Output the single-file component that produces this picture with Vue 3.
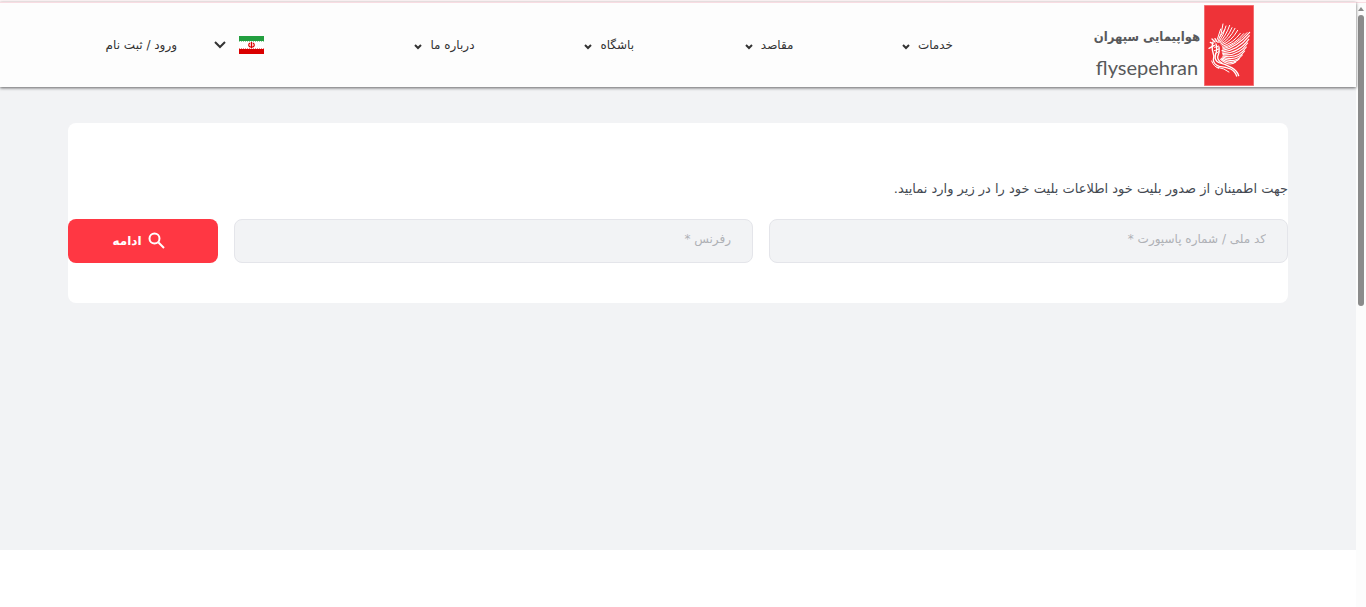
<script setup>
import { ref } from 'vue'

const menuItems = ['خدمات', 'مقاصد', 'باشگاه', 'درباره ما']

const nationalCode = ref('')
const reference = ref('')
</script>

<template>
  <div class="shell">
    <div class="page" dir="rtl" lang="fa">
      <header class="header">
        <a class="logo" href="#">
          <svg class="logo-mark" viewBox="0 0 150 243" aria-hidden="true">
            <rect width="150" height="243" fill="#ee3338" />
            <g fill="none" stroke="#fff" stroke-linecap="round">
              <g stroke-width="3.4">
                <path d="M54 137Q98 128 137 82" />
                <path d="M55 141Q102 136 136 92" />
                <path d="M56 145Q104 145 134 103" />
                <path d="M57 149Q104 154 131 114" />
                <path d="M57 153Q102 163 127 126" />
                <path d="M56 156Q98 171 122 138" />
                <path d="M54 159Q92 178 115 150" />
                <path d="M52 161Q84 183 106 161" />
                <path d="M50 163Q75 186 95 171" />
              </g>
              <g stroke-width="3">
                <path d="M41 112Q54 87 57 57" />
                <path d="M44 112Q59 91 66 63" />
                <path d="M47 112Q66 93 77 61" />
                <path d="M49 114Q71 99 84 68" />
                <path d="M51 117Q76 105 93 70" />
                <path d="M53 120Q82 110 101 76" />
                <path d="M55 124Q87 115 109 85" />
                <path d="M56 128Q91 120 119 86" />
                <path d="M56 132Q94 123 129 83" />
                <path d="M40 103L50 72M46 98L62 74" />
              </g>
              <g stroke-width="4">
                <path d="M27 111Q22 125 27 143Q32 153 28 165Q29 178 46 184Q66 186 80 192Q94 200 98 213" />
                <path d="M36 117Q41 133 34 151Q31 167 45 173Q66 178 83 188Q99 197 104 212" />
                <path d="M31 121L15 130M33 111L24 102M27 116L19 112M38 109L33 101" />
                <path d="M45 126Q48 140 41 155Q40 166 54 174" />
                <path d="M32 127L44 123M31 137L45 132M34 146L44 140" stroke-width="3" />
                <path d="M23 168Q29 185 44 190M38 186Q62 190 75 201" stroke-width="3" />
              </g>
            </g>
            <rect x="1" y="1" width="148" height="241" fill="none" stroke="#f58a8e" stroke-width="2" />
          </svg>
          <span class="logo-text">
            <span class="logo-fa">هواپیمایی سپهران</span>
            <span class="logo-en" dir="ltr">flysepehran</span>
          </span>
        </a>

        <nav class="menu">
          <button v-for="item in menuItems" :key="item" class="menu-item" type="button">
            {{ item }}
            <svg class="menu-arrow" viewBox="0 0 8 6" aria-hidden="true">
              <path d="M1 1l3 3 3-3" />
            </svg>
          </button>
        </nav>

        <div class="user-area">
          <button class="language" type="button" aria-label="فارسی">
            <svg class="flag" viewBox="0 0 25 18" aria-hidden="true">
              <rect width="25" height="18" fill="#fff" />
              <rect width="25" height="5" fill="#239f40" />
              <rect y="13" width="25" height="5" fill="#da0000" />
              <path d="M0 5.5h25" stroke="#239f40" stroke-dasharray="1 1" opacity=".45" />
              <path d="M0 12.5h25" stroke="#da0000" stroke-dasharray="1 1" opacity=".45" />
              <g fill="none" stroke="#da0000">
                <path d="M12.5 6v6" stroke-width="1.4" />
                <path d="M11 7C9 8.2 9.4 10.6 11.8 11.2M14 7c2 1.2 1.6 3.6-.8 4.2" stroke-width="1.2" />
              </g>
            </svg>
            <svg class="language-arrow" viewBox="0 0 12 8" aria-hidden="true">
              <path d="M1 1l5 5 5-5" />
            </svg>
          </button>
          <a class="login" href="#">ورود / ثبت نام</a>
        </div>
      </header>

      <main class="content">
        <section class="card">
          <p class="hint">جهت اطمینان از صدور بلیت خود اطلاعات بلیت خود را در زیر وارد نمایید.</p>
          <form class="search-form" @submit.prevent>
            <input
              v-model="nationalCode"
              class="field"
              type="text"
              aria-label="کد ملی / شماره پاسپورت"
              placeholder="کد ملی / شماره پاسپورت *"
            />
            <input
              v-model="reference"
              class="field"
              type="text"
              aria-label="رفرنس"
              placeholder="رفرنس *"
            />
            <button class="submit" type="submit">
              <svg class="search-icon" viewBox="0 0 18 18" aria-hidden="true">
                <circle cx="6.5" cy="6.5" r="5" />
                <path d="M10.5 10.5l5.5 5.5" />
              </svg>
              ادامه
            </button>
          </form>
        </section>
      </main>
    </div>

    <div class="scrollbar" aria-hidden="true">
      <svg class="scroll-arrow" viewBox="0 0 6 4">
        <path d="M3 0l3 4H0z" fill="#8b8b8b" />
      </svg>
      <div class="scroll-thumb"></div>
    </div>
  </div>
</template>

<style>
body {
  margin: 0;
  background: #fff;
}
</style>

<style scoped>
* {
  box-sizing: border-box;
}

.shell {
  display: flex;
  min-height: 100vh;
  border-top: 2px solid #fff7f8;
  font-family: 'DejaVu Sans', sans-serif;
}

.page {
  flex: 1;
  min-width: 0;
}

button {
  border: none;
  padding: 0;
  background: none;
  font-family: inherit;
  cursor: pointer;
}

.header {
  position: relative;
  display: flex;
  align-items: center;
  height: 85px;
  padding: 0 102px;
  border-top: 1px solid #f8dce2;
  background: #fdfdfd;
  box-shadow: 0 1px 3px rgba(0, 0, 0, 0.6);
}

.logo {
  display: flex;
  align-items: center;
  gap: 5px;
  width: 159px;
  color: #58595b;
  text-decoration: none;
}

.logo-mark {
  flex: none;
  width: 50px;
  height: 81px;
}

.logo-text {
  display: flex;
  flex-direction: column;
  align-items: center;
  width: 104px;
  padding-top: 12px;
  white-space: nowrap;
}

.logo-fa {
  font-family: 'DejaVu Sans Condensed', 'DejaVu Sans', sans-serif;
  font-size: 13px;
  font-weight: bold;
  line-height: 32px;
}

.logo-en {
  font-family: Lato, sans-serif;
  font-size: 20px;
  line-height: 28px;
}

.menu {
  display: grid;
  flex: 1;
  grid-template-columns: repeat(4, 1fr);
  margin: 0 142px 0 51px;
}

.menu-item {
  display: flex;
  align-items: center;
  gap: 8px;
  color: #333;
  font-size: 12px;
  line-height: 24px;
  white-space: nowrap;
}

.menu-arrow,
.language-arrow {
  fill: none;
  stroke: #333;
  stroke-width: 2;
}

.menu-arrow {
  width: 8px;
  height: 6px;
  margin-top: 4px;
}

.user-area {
  display: flex;
  align-items: center;
  gap: 37px;
}

.language {
  display: flex;
  align-items: center;
  gap: 13px;
}

.flag {
  width: 25px;
  height: 18px;
}

.language-arrow {
  width: 12px;
  height: 8px;
}

.login {
  min-width: 75px;
  color: #333;
  font-size: 12px;
  line-height: 24px;
  text-decoration: none;
  white-space: nowrap;
}

.content {
  min-height: 463px;
  padding: 36px 68px;
  background: #f2f3f5;
}

.card {
  padding: 52px 0 40px;
  border-radius: 8px;
  background: #fff;
}

.hint {
  margin: 0 0 16px;
  color: #444952;
  font-size: 13px;
  line-height: 28px;
}

.search-form {
  display: flex;
  gap: 16px;
}

.field {
  flex: 1;
  min-width: 0;
  height: 44px;
  padding: 0 21px 4px;
  border: 1px solid #e4e5ea;
  border-radius: 8px;
  outline: none;
  background: #f2f3f5;
  color: #444952;
  font-family: inherit;
  font-size: 12px;
}

.field::placeholder {
  color: #afb1b6;
  opacity: 1;
}

.submit {
  display: flex;
  align-items: center;
  justify-content: center;
  gap: 6px;
  width: 150px;
  height: 44px;
  padding-right: 8px;
  border-radius: 8px;
  background: #ff3743;
  color: #fff;
  font-size: 12px;
  font-weight: bold;
}

.search-icon {
  width: 18px;
  height: 18px;
  fill: none;
  stroke: #fff;
  stroke-width: 2;
}

.scrollbar {
  display: flex;
  flex-direction: column;
  align-items: center;
  gap: 4px;
  width: 10px;
  padding: 4px 2px 0;
  border-top: 1px solid #f8dce2;
  background: #fcfcfc;
}

.scroll-arrow {
  width: 6px;
  height: 4px;
}

.scroll-thumb {
  width: 6px;
  height: 48vh;
  border-radius: 3px;
  background: #8b8b8b;
}
</style>
